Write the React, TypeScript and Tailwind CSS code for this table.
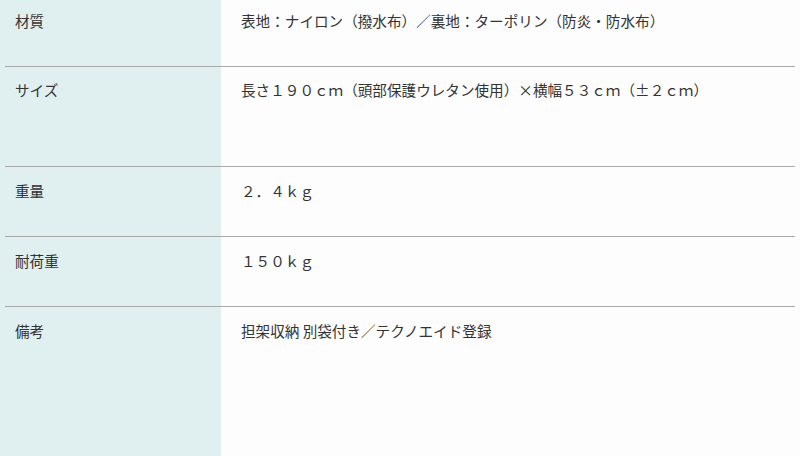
const rows = [
  { label: "材質", value: "表地：ナイロン（撥水布）／裏地：ターポリン（防炎・防水布）", h: "h-[66px]", pt: "pt-[11px]" },
  { label: "サイズ", value: "長さ１９０ｃｍ（頭部保護ウレタン使用）×横幅５３ｃｍ（±２ｃｍ）", h: "h-[99px]", pt: "pt-[13px]" },
  { label: "重量", value: "２．４ｋｇ", h: "h-[69px]", pt: "pt-[14px]" },
  { label: "耐荷重", value: "１５０ｋｇ", h: "h-[69px]", pt: "pt-[14px]" },
  { label: "備考", value: "担架収納 別袋付き／テクノエイド登録", h: "h-[149px]", pt: "pt-[14px]" },
];

export default function App() {
  return (
    <div
      className="w-[800px] h-[456px] overflow-hidden bg-[linear-gradient(to_right,#e0f0f0_221px,#fdfdfd_221px)] text-[14.6px] leading-[20px] text-[#333]"
      style={{ fontFamily: '"Noto Sans CJK JP", "Noto Sans", sans-serif' }}
    >
      {rows.map((r, i) => (
        <div key={r.label}>
          {i > 0 && <div className="mx-[5px] h-px bg-[#aaaaaa]" />}
          <div className={`flex ${r.h} ${r.pt}`}>
            <div className="w-[221px] shrink-0 pl-[15px]">{r.label}</div>
            <div className="pl-[20px]">{r.value}</div>
          </div>
        </div>
      ))}
    </div>
  );
}
